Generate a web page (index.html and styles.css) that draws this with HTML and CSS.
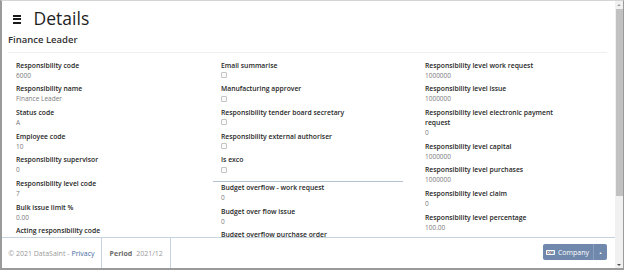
FILE: index.html
```html
<!DOCTYPE html>
<html lang="en">
<head>
    <meta charset="UTF-8">
    <meta name="viewport" content="width=device-width, initial-scale=1.0">
    <title>Details</title>
    <link rel="stylesheet" href="styles.css">
</head>
<body>
    <div class="window">
        <div class="viewport">
            <div class="page">
                <div class="header">
                    <span class="menu-icon"><i></i><i></i><i></i></span>
                    <h1>Details</h1>
                </div>
                <h2 class="subtitle">Finance Leader</h2>
                <div class="divider"></div>

                <div class="fields">
                    <div class="column">
                        <div class="field"><div class="label">Responsibility code</div><div class="value">6000</div></div>
                        <div class="field"><div class="label">Responsibility name</div><div class="value">Finance Leader</div></div>
                        <div class="field"><div class="label">Status code</div><div class="value">A</div></div>
                        <div class="field"><div class="label">Employee code</div><div class="value">10</div></div>
                        <div class="field"><div class="label">Responsibility supervisor</div><div class="value">0</div></div>
                        <div class="field"><div class="label">Responsibility level code</div><div class="value">7</div></div>
                        <div class="field"><div class="label">Bulk issue limit %</div><div class="value">0.00</div></div>
                        <div class="field"><div class="label">Acting responsibility code</div><div class="value">6000</div></div>
                    </div>
                    <div class="column">
                        <div class="field"><div class="label">Email summarise</div><div class="value"><span class="check"></span></div></div>
                        <div class="field"><div class="label">Manufacturing approver</div><div class="value"><span class="check"></span></div></div>
                        <div class="field"><div class="label">Responsibility tender board secretary</div><div class="value"><span class="check"></span></div></div>
                        <div class="field"><div class="label">Responsibility external authoriser</div><div class="value"><span class="check"></span></div></div>
                        <div class="field"><div class="label">Is exco</div><div class="value"><span class="check"></span></div></div>
                        <hr class="group-line">
                        <div class="field"><div class="label">Budget overflow - work request</div><div class="value">0</div></div>
                        <div class="field"><div class="label">Budget over flow issue</div><div class="value">0</div></div>
                        <div class="field"><div class="label">Budget overflow purchase order</div><div class="value">0</div></div>
                    </div>
                    <div class="column">
                        <div class="field"><div class="label">Responsibility level work request</div><div class="value">1000000</div></div>
                        <div class="field"><div class="label">Responsibility level issue</div><div class="value">1000000</div></div>
                        <div class="field"><div class="label">Responsibility level electronic payment request</div><div class="value">0</div></div>
                        <div class="field"><div class="label">Responsibility level capital</div><div class="value">1000000</div></div>
                        <div class="field"><div class="label">Responsibility level purchases</div><div class="value">1000000</div></div>
                        <div class="field"><div class="label">Responsibility level claim</div><div class="value">0</div></div>
                        <div class="field"><div class="label">Responsibility level percentage</div><div class="value">100.00</div></div>
                    </div>
                </div>
            </div>

            <div class="footer">
                <div class="footer-item copyright">&copy; 2021 DataSaint - <a href="#">Privacy</a></div>
                <div class="footer-item period"><b>Period</b> 2021/12</div>
                <div class="footer-right">
                    <div class="company-btn">
                        <span class="company-main"><span class="badge">DM</span>Company</span>
                        <span class="company-toggle">&#9650;</span>
                    </div>
                </div>
            </div>
        </div>

        <div class="scrollbar">
            <span class="arrow up"></span>
            <div class="thumb"></div>
            <span class="arrow down"></span>
        </div>
    </div>
</body>
</html>
```

FILE: styles.css
```css
body {
    margin: 0;
    font-family: 'Open Sans', 'Noto Sans', sans-serif;
    background: #ffffff;
    color: #222222;
}

.window {
    width: 624px;
    height: 270px;
    box-sizing: border-box;
    border-top: 1px solid #d4d4d4;
    border-left: 2px solid #9a9a9a;
    border-right: 1px solid #9a9a9a;
    border-bottom: 2px solid #9a9a9a;
    display: flex;
    overflow: hidden;
}

.viewport {
    flex: 1;
    display: flex;
    flex-direction: column;
    min-width: 0;
}

.page {
    flex: 1;
    overflow: hidden;
    padding: 5.4px 8px 0 6px;
}

/* header */
.header {
    display: flex;
    align-items: center;
    height: 24px;
}

.menu-icon {
    display: flex;
    flex-direction: column;
    gap: 1.6px;
    margin-left: 5.3px;
    margin-right: 12.3px;
    margin-top: 1.5px;
}

.menu-icon i {
    display: block;
    width: 8px;
    height: 2px;
    background: #1a1a1a;
}

.header h1 {
    margin: 0;
    font-size: 17.5px;
    font-weight: 400;
    line-height: 24px;
    color: #1e1e1e;
}

.subtitle {
    margin: 4px 0 0 0;
    font-size: 9.5px;
    font-weight: 600;
    line-height: 12px;
    color: #333333;
}

.divider {
    height: 1.5px;
    background: #efefef;
    margin-top: 5.3px;
}

/* fields */
.fields {
    display: grid;
    grid-template-columns: 205px 204px 1fr;
    margin-top: 7.4px;
}

.column {
    display: flex;
    flex-direction: column;
    padding-left: 8px;
}

.field {
    max-width: 140px;
    margin-bottom: 3.7px;
}

.label {
    font-size: 6.8px;
    font-weight: 600;
    line-height: 10px;
    color: #262626;
}

.value {
    font-size: 6.5px;
    line-height: 10px;
    height: 10px;
    color: #7a7a7a;
}

.check {
    display: block;
    position: relative;
    top: 1.4px;
    width: 4px;
    height: 4px;
    border: 0.7px solid #c4c4c4;
    border-radius: 1px;
    background: #fafafa;
}

.group-line {
    margin: 2.4px 0 0.6px -8px;
    width: 190px;
    height: 1px;
    border: none;
    background: #b4c1d2;
}

/* footer */
.footer {
    height: 30px;
    border-top: 1px solid #c7d2df;
    display: flex;
    align-items: stretch;
    font-size: 7px;
    color: #999999;
    background: #ffffff;
}

.footer-item {
    display: flex;
    align-items: center;
    border-right: 1px solid #c7d2df;
}

.copyright {
    width: 93px;
    padding-left: 6.3px;
}

.copyright a {
    color: #3f6aa0;
    text-decoration: none;
    margin-left: 2px;
}

.period {
    width: 60px;
    padding-left: 7.3px;
}

.period b {
    color: #6a6a6a;
    margin-right: 4px;
}

.footer-right {
    flex: 1;
    display: flex;
    justify-content: flex-end;
    align-items: center;
    padding-right: 8px;
    padding-bottom: 2px;
}

.company-btn {
    display: flex;
    height: 16px;
    background: #6f88ac;
    border-radius: 2px;
    color: #ffffff;
}

.company-main {
    display: flex;
    align-items: center;
    padding: 0 4px 0 2.7px;
    border-right: 1px solid #8a9fbd;
    font-size: 7px;
}

.badge {
    display: inline-block;
    background: #ffffff;
    color: #3d4f6a;
    font-size: 4px;
    font-weight: 700;
    line-height: 5px;
    padding: 0 1.6px;
    border-radius: 1px;
    margin-right: 2.5px;
}

.company-toggle {
    width: 13px;
    display: flex;
    align-items: center;
    justify-content: center;
    font-size: 3.5px;
}

/* fake window scrollbar */
.scrollbar {
    width: 8px;
    background: #f1f1f1;
    position: relative;
}

.thumb {
    position: absolute;
    left: 1px;
    right: 0;
    top: 8.3px;
    height: 187px;
    background: #c1c1c1;
}

.arrow {
    position: absolute;
    left: 2px;
    width: 0;
    height: 0;
    border-left: 2px solid transparent;
    border-right: 2px solid transparent;
}

.arrow.up {
    top: 2.5px;
    border-bottom: 2px solid #a3a3a3;
}

.arrow.down {
    bottom: 2px;
    border-top: 2px solid #505050;
}
```
